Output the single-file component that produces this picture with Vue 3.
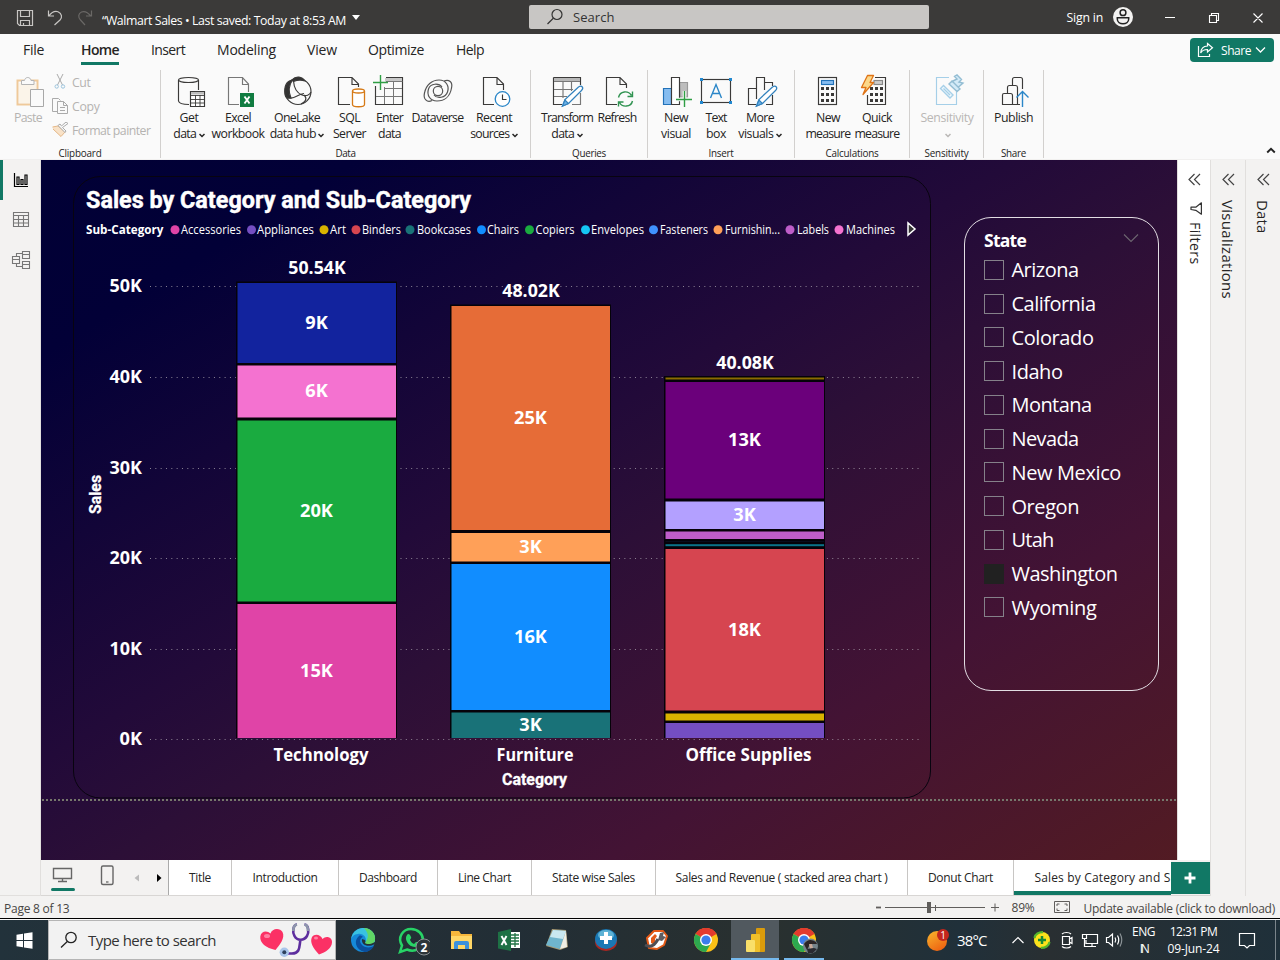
<script setup>
const vFit = {
  mounted(el, { value }) {
    const range = document.createRange()
    range.selectNodeContents(el)
    const box = range.getBoundingClientRect()
    const size = Math.max(box.width, box.height)
    el.style.letterSpacing = (value - size) / el.textContent.length + 'px'
  },
}

const menu = [
  { t: 'File', w: 21, x: 23 }, { t: 'Home', w: 38, x: 37, on: true }, { t: 'Insert', w: 34, x: 32 },
  { t: 'Modeling', w: 59, x: 32 }, { t: 'View', w: 30, x: 31 }, { t: 'Optimize', w: 56, x: 31 }, { t: 'Help', w: 28, x: 32 },
]

const groups = [
  { name: 'Data', nw: 20, w: 370, pad: 6, items: [
    { icon: 'get', cx: 189, w: 44, l: [['Get', 19], ['data', 23, 1]] },
    { icon: 'excel', cx: 238, w: 54, l: [['Excel', 26], ['workbook', 53]] },
    { icon: 'lake', cx: 297, w: 64, l: [['OneLake', 46], ['data hub', 46, 1]] },
    { icon: 'sql', cx: 349.5, w: 41, l: [['SQL', 21], ['Server', 33]] },
    { icon: 'enter', cx: 389.5, w: 39, l: [['Enter', 27], ['data', 23]] },
    { icon: 'verse', cx: 437.5, w: 57, l: [['Dataverse', 52]] },
    { icon: 'recent', cx: 494, w: 56, l: [['Recent', 36], ['sources', 39, 1]] },
  ] },
  { name: 'Queries', nw: 34, w: 117, pad: 7, items: [
    { icon: 'transform', cx: 567, w: 58, l: [['Transform', 52], ['data', 23, 1]] },
    { icon: 'refresh', cx: 617, w: 42, l: [['Refresh', 39]] },
  ] },
  { name: 'Insert', nw: 25, w: 147, pad: 8, items: [
    { icon: 'visual', cx: 676, w: 40, l: [['New', 24], ['visual', 30]] },
    { icon: 'text', cx: 716, w: 40, l: [['Text', 21], ['box', 20]] },
    { icon: 'more', cx: 760, w: 48, l: [['More', 28], ['visuals', 35, 1]] },
  ] },
  { name: 'Calculations', nw: 53, w: 115, pad: 9, items: [
    { icon: 'calc', cx: 828, w: 48, l: [['New', 24], ['measure', 45]] },
    { icon: 'quick', cx: 877, w: 50, l: [['Quick', 30], ['measure', 45]] },
  ] },
  { name: 'Sensitivity', nw: 44, w: 74, pad: 7, items: [
    { icon: 'sens', cx: 947, w: 60, off: true, l: [['Sensitivity', 53], ['', 0, 1]] },
  ] },
  { name: 'Share', nw: 25, w: 60, pad: 8, items: [
    { icon: 'publish', cx: 1013.5, w: 43, l: [['Publish', 39]] },
  ] },
]

const legend = [
  ['Accessories', '#e044a7', 175, 181, 60], ['Appliances', '#744ec2', 251.5, 257, 57], ['Art', '#d9b300', 324, 330, 16],
  ['Binders', '#d64550', 356, 362, 39], ['Bookcases', '#197278', 410, 417, 54], ['Chairs', '#118dff', 481.5, 487, 32],
  ['Copiers', '#1aab40', 529.5, 535.5, 39], ['Envelopes', '#15c6f4', 585.5, 591, 53], ['Fasteners', '#4092ff', 653.5, 660, 48],
  ['Furnishin...', '#ffa058', 718, 725, 55], ['Labels', '#be5dc9', 790, 797, 32], ['Machines', '#f472d0', 839, 846, 49],
]

const axis = [['50K', 286.5], ['40K', 377.5], ['30K', 468.5], ['20K', 558.5], ['10K', 649.5], ['0K', 739.5]]

const columns = [
  { name: 'Technology', x: 236.5, nx: 273.5, nw: 95, total: '50.54K', ty: 274, parts: [
    [282.5, 363, '#12239e', '9K'], [365, 417.5, '#f472d0', '6K'], [420, 601.5, '#1aab40', '20K'], [603.5, 738, '#e044a7', '15K'],
  ] },
  { name: 'Furniture', x: 450.5, nx: 496.5, nw: 77, total: '48.02K', ty: 297, parts: [
    [305.5, 530, '#e66c37', '25K'], [532.5, 561.5, '#ffa058', '3K'], [563.5, 710, '#118dff', '16K'], [712, 738, '#197278', '3K'],
  ] },
  { name: 'Office Supplies', x: 664.5, nx: 685.5, nw: 126, total: '40.08K', ty: 369, parts: [
    [377, 379.5, '#8a6c00', ''], [381.5, 498.5, '#6b007b', '13K'], [501, 529, '#b3a0ff', '3K'], [531, 539, '#be5dc9', ''],
    [541, 542, '#0d1730', ''], [543.7, 546.2, '#0b7288', ''], [548.5, 710.5, '#d64550', '18K'], [713, 720.5, '#d9b300', ''], [722.5, 738, '#744ec2', ''],
  ] },
]

const states = [
  ['Arizona', 67], ['California', 84], ['Colorado', 82], ['Idaho', 51], ['Montana', 80], ['Nevada', 67],
  ['New Mexico', 109.5], ['Oregon', 67.5], ['Utah', 42], ['Washington', 106], ['Wyoming', 85],
]

const tabs = [
  ['Title', 22, 63], ['Introduction', 65, 107], ['Dashboard', 58, 99], ['Line Chart', 53, 94],
  ['State wise Sales', 83, 124], ['Sales and Revenue ( stacked area chart )', 212, 252], ['Donut Chart', 65, 106],
]

const apps = ['edge', 'whatsapp', 'files', 'xls', 'note', 'aid', 'tool', 'chrome', 'pbi', 'chrome2']
</script>

<template>
  <div class="window">
    <header class="titlebar">
      <svg class="quick" viewBox="0 0 100 34" fill="none">
        <g stroke="#c8c6c4" stroke-width="1.2">
          <path d="M17.500 10.500H32.500V25.500H19.500L17.500 23.500ZM20.500 10.500V16.500H29.500V10.500M20.500 25.500V20.500H29.500V25.500M23.500 25V23" />
          <path d="M48.500 10.500V16H54M48.800 16C51 13 54 10.500 58 11.700C62 13.500 62.500 17.500 60 20L54.500 25" />
        </g>
        <path stroke="#6a6866" stroke-width="1.2" d="M91.500 10.500V16H86M91 16C88 12.500 85 10.500 81.500 12C78 13.500 78 17.500 80.500 20L85 25" />
      </svg>
      <div class="doc"><span v-fit="244">“Walmart Sales • Last saved: Today at 8:53 AM</span><i class="tri"></i></div>
      <div class="search">
        <svg width="18" height="18" viewBox="0 0 18 18" fill="none" stroke="#333" stroke-width="1.2"><circle cx="11" cy="6.500" r="5" /><path d="M7.300 10.300L1.500 16" /></svg>
        <span v-fit="41.500">Search</span>
      </div>
      <div class="signin"><span v-fit="36.500">Sign in</span>
        <svg width="20" height="20" viewBox="0 0 20 20"><circle cx="10" cy="10" r="10" fill="#f3f2f1" /><g fill="none" stroke="#222" stroke-width="1.500"><circle cx="10" cy="5.700" r="2.900" /><path d="M4.300 10.700H15.700V12C15.700 18.300 4.300 18.300 4.300 12Z" /></g></svg>
      </div>
      <svg class="winctl" viewBox="1150 0 130 34" fill="none" stroke="#fff" stroke-width="1.100"><path d="M1165 17.500H1175M1209.500 15.500H1216.500V22.500H1209.500ZM1211.500 15.500V13.500H1218.500V20.500H1216.500M1253.500 13.500L1262.500 22.500M1262.500 13.500L1253.500 22.500" /></svg>
    </header>

    <nav class="menu">
      <div v-for="m in menu" :key="m.t" class="mi" :class="{ on: m.on }" :style="{ marginLeft: m.x + 'px', width: m.w + 'px' }"><span v-fit="m.w">{{ m.t }}</span></div>
      <button class="share">
        <svg width="17" height="16" viewBox="0 0 17 16" fill="none" stroke="#fff" stroke-width="1.200"><path d="M1.500 4V14.500H12.500V12M10.500 1.500L15.500 5.700L10.500 10V7.500C7 7.500 5 8.500 3.700 11C4 6.500 6.500 4.200 10.500 4Z" /></svg>
        <span v-fit="30">Share</span>
        <svg width="11" height="8" viewBox="0 0 11 8" fill="none" stroke="#fff" stroke-width="1.300"><path d="M1 1.500L5.500 6L10 1.500" /></svg>
      </button>
    </nav>

    <section class="ribbon">
      <div class="group clip">
        <div class="clipbody">
          <div class="paste">
            <svg width="32" height="34" viewBox="14 74 32 34" fill="none">
              <path d="M24 80.500H17.500V104.500H31" stroke="#efc99a" stroke-width="2" /><path d="M31 80.500H37.500V89" stroke="#efc99a" stroke-width="2" />
              <path d="M19 83H36V89H30V103H19Z" fill="#fbf4e9" />
              <path d="M21.500 84.500V80.500H24.500C25 76.500 30.500 76.500 31 80.500H34V84.500Z" fill="#fafafa" stroke="#b5b5b5" /><path d="M30.500 89.500H43.500V106.500H30.500Z" fill="#fafafa" stroke="#a8a8a8" />
            </svg>
            <span v-fit="28">Paste</span>
          </div>
          <div class="clipcmds">
            <div><svg width="16" height="16" viewBox="52 75 16 16" fill="none" stroke="#aaa"><path d="M57 75L62.500 86M63 75L57.500 86" /><g stroke="#9cc4dd"><circle cx="56.700" cy="87.500" r="1.700" /><circle cx="63" cy="87.500" r="1.700" /></g></svg><span v-fit="18.500">Cut</span></div>
            <div><svg width="16" height="16" viewBox="52 98 16 16" fill="none" stroke="#aaa"><path d="M57 111.500H52.500V98.500H58.500L60.500 100.500M57.500 101.500H63.500L67.500 105.500V113.500H57.500ZM63.500 101.500V105.500H67.500M60 107.500H65M60 110.500H65" /></svg><span v-fit="27.500">Copy</span></div>
            <div><svg width="16" height="16" viewBox="52 122 16 16" fill="none"><path d="M52.500 127L58 126L65 132L61 136.500L53 129" fill="#f8e2c8" stroke="#e5b887" /><path d="M58 125.500L65 132.500L66 131L62.500 127.500L68 123.500L66 122L61.500 126L60 124Z" fill="#fafafa" stroke="#aaa" /></svg><span v-fit="78.500">Format painter</span></div>
          </div>
        </div>
        <div class="gname"><span v-fit="43">Clipboard</span></div>
      </div>
      <div v-for="g in groups" :key="g.name" class="group" :style="{ width: g.w + 'px' }">
        <div class="gbody" :style="{ paddingLeft: g.pad + 'px' }">
          <div v-for="b in g.items" :key="b.icon" class="rb" :class="{ off: b.off }" :style="{ width: b.w + 'px' }">
            <svg width="36" height="36" :viewBox="`${Math.round(b.cx - 18)} 73 36 36`" fill="none" stroke="#3b3a39" stroke-width="1.150">
              <template v-if="b.icon === 'get'"><ellipse cx="188.500" cy="80" rx="10" ry="2.500" /><path d="M178.500 80V101C179 103.500 184 104.500 189 104.500M198.500 80V90" /><path d="M190.500 91.500H204.500V106.500H190.500Z" fill="#fff" /><path d="M191 92H204V94.500H191Z" fill="#bdbdbd" stroke="none" /><path d="M190.500 95.500H204.500M190.500 99.500H204.500M190.500 103H204.500M195.500 95V106M200 95V106" stroke-width=".9" /></template>
              <template v-else-if="b.icon === 'excel'"><path d="M239 104.500H228.500V77.500H242.500L248.500 84V92M242.500 77.500V84.500H248.500" stroke="#777" /><rect x="240" y="93" width="14" height="14" fill="#107c41" stroke="none" /><path d="M244.500 96.500L249.500 103.500M249.500 96.500L244.500 103.500" stroke="#fff" stroke-width="1.900" /></template>
              <template v-else-if="b.icon === 'lake'"><circle cx="298" cy="91.500" r="13" /><path d="M285 94C284 86 287 81 292.500 80C289 85 288 91 291 98C287 99 285 97 285 94Z" fill="#333" /><path d="M292 80C296 75.500 302 76.500 305 81C301 79.500 297 80 293.500 81.500Z" fill="#333" /><path d="M293.500 81C294 88 297 93 302 95C306 96.500 310 95 311 92M290 98C295 99 298 94 304 93.500M304 95C308 99 305 102 301 104" /></template>
              <template v-else-if="b.icon === 'sql'"><path d="M350 104.500H338.500V77.500H352L358.500 84V87M352 77.500V84.500H358.500" /><path d="M352.500 91V104.500C352.500 107.500 364.500 107.500 364.500 104.500V91" stroke="#d67a17" stroke-width="1.300" fill="#fff" /><ellipse cx="358.500" cy="91" rx="6" ry="2" stroke="#d67a17" stroke-width="1.300" fill="#fff" /></template>
              <template v-else-if="b.icon === 'enter'"><path d="M386 77.500H402.500V104.500H375.500V86" /><path d="M385 78H402V81.500H385Z" fill="#c8c8c8" stroke="none" /><path d="M386 81.500H402.500M385 88.500H402M376 96.500H402M384.500 87V104M393.500 82V104" stroke="#777" stroke-width="1" /><path d="M373 82.500H388M380.500 75V90" stroke="#2f9e44" stroke-width="1.400" /></template>
              <template v-else-if="b.icon === 'verse'"><g stroke="#555" stroke-width="1.200"><path d="M432 100.500C427 103 423 99 424.500 93C426 85 432 80 439 80C446 80 449.500 86 447.500 92C445.500 98 437 99 434 95" /><path d="M444 81C449 79 453 82 451.500 88C450 97 444 101 437 101C430 101 426.500 95 428.500 89C430.500 83 439 83 442 87" /><circle cx="438" cy="91" r="4.700" /></g></template>
              <template v-else-if="b.icon === 'recent'"><path d="M494 104.500H483.500V77.500H497L503.500 84V90M497 77.500V84.500H503.500" /><circle cx="502.500" cy="99" r="7.300" stroke="#2a86c8" stroke-width="1.300" fill="#fff" /><path d="M502.500 94.500V99.500H506.500" /></template>
              <template v-else-if="b.icon === 'transform'"><path d="M553.500 77.500H580.500V85M553.500 77.500V104.500H562" /><path d="M554 78H580V81.500H554Z" fill="#b8b8b8" stroke="none" /><path d="M554 81.500H580M554 89.500H573M554 96.500H567M563 82V98M571.500 82V91M572 104.500H580.500V93" stroke="#777" /><path d="M562.500 106L565 99.500L578.500 87C582 84.500 584 88 581.500 90.500L568.500 103.500Z" fill="#fff" stroke="#3382bd" stroke-width="1.300" /><path d="M562.500 106L565 100L568.500 103.500Z" fill="#6cb2e8" stroke="#3382bd" /></template>
              <template v-else-if="b.icon === 'refresh'"><path d="M617 104.500H606.500V77.500H620L626.500 84V88M620 77.500V84.500H626.500" /><g stroke="#2f9250" stroke-width="1.400"><path d="M618.500 97.500C620 91 628 90 631.500 95.500M632.500 91.500V96.500H627.500M632.500 101C631 107.500 622 107.500 619.500 102.500M618.500 106.500V102H623.500" /></g></template>
              <template v-else-if="b.icon === 'visual'"><path d="M663.500 88.500H671.500V104.500H663.500Z" fill="#86bdf0" stroke="#2272b8" /><path d="M679.500 82.500H687.500V97H680Z" fill="#bdbdbd" stroke="#999" /><path d="M671.500 77.500H679.500V104.500H671.500Z" fill="#fff" /><path d="M676 99.500H692M684.500 91V107" stroke="#fafafa" stroke-width="3.500" /><path d="M676 99.500H692M684.500 91V107" stroke="#2f9e44" stroke-width="1.400" /></template>
              <template v-else-if="b.icon === 'text'"><rect x="701.500" y="79.500" width="29" height="23" /><path d="M700 78H703V81H700ZM729 78H732V81H729ZM700 101H703V104H700ZM729 101H732V104H729Z" fill="#2188d0" stroke="none" /><path d="M710.500 98L716 84.500L721.500 98M712.500 93.500H719.500" stroke="#2a86c8" stroke-width="1.400" /></template>
              <template v-else-if="b.icon === 'more'"><path d="M756 104.500H748.500V88.500H756.500M756.500 99V77.500H764.500V90M764.500 82.500H772.500V86M766 104.500H772.500V95" /><path d="M756.500 106L759 99.500L772.500 87C776 84.500 778 88 775.500 90.500L762.500 103.500Z" fill="#fff" stroke="#3382bd" stroke-width="1.300" /><path d="M756.500 106L759 100L762.500 103.500Z" fill="#6cb2e8" stroke="#3382bd" /></template>
              <template v-else-if="b.icon === 'calc'"><rect x="818.500" y="77.500" width="18" height="27" /><rect x="821.500" y="80.500" width="12" height="4" fill="#86bdf0" stroke="#2272b8" /><path d="M821 88.500H834M821 94.500H834M821 100.500H834" stroke-width="3" stroke-dasharray="3 2" /></template>
              <template v-else-if="b.icon === 'quick'"><path d="M875 77.500H885.500V104.500H867.500V95" /><rect x="874" y="80.500" width="8.500" height="4" fill="#ccc" stroke="#888" /><path d="M870 88.500H883M870 94.500H883M870 100.500H883" stroke-width="3" stroke-dasharray="3 2" /><path d="M867.500 75.500H873.500L870 82.500H873.500L863 94.500L866 87.500H861.500Z" fill="#fcd88a" stroke="#df7316" stroke-width="1.300" stroke-linejoin="round" /></template>
              <template v-else-if="b.icon === 'sens'"><g stroke="#a5cfe8"><path d="M949 77.500H936.500V104.500H956.500V92" /><path d="M940.500 88.500L943.500 85.500L953 95L950 98ZM943.500 88.500L950 95" fill="#eef7fc" stroke-width="1.400" /><path d="M949 84L952 81L960 89L957 91.500ZM951 82L957 79L954.500 76.500L957 75L961.500 79.500L959 82L963 83L958.500 87" fill="#d3eaf7" stroke="#93bdd3" stroke-width="1.400" /></g></template>
              <template v-else><path d="M1002.500 104.500V95Q1002.500 93.500 1004 93.500H1010.500Q1012.500 93.500 1012.500 95.500V104.500ZM1007.500 93V87.500Q1007.500 85.500 1009.500 85.500H1015.500Q1017.500 85.500 1017.500 87.500V104.500M1012.500 85V79.500Q1012.500 77.500 1014.500 77.500H1020.500Q1022.500 77.500 1022.500 79.500V89M1012 104.500H1020" /><path d="M1022.500 107V91.500M1016.500 97.500L1022.500 91.500L1028.500 97.500" stroke="#2a86c8" stroke-width="1.400" /></template>
            </svg>
            <div v-for="(l, i) in b.l" :key="i" class="ll">
              <span v-if="l[0]" v-fit="l[1]">{{ l[0] }}</span>
              <svg v-if="l[2]" class="chev" width="6" height="5" viewBox="0 0 6 5" fill="none" stroke="currentColor" stroke-width="1.500"><path d="M.5 1L3 3.500L5.500 1" /></svg>
            </div>
          </div>
        </div>
        <div class="gname"><span v-fit="g.nw">{{ g.name }}</span></div>
      </div>
      <svg class="collapse" width="10" height="7" viewBox="0 0 10 7" fill="none" stroke="#222" stroke-width="1.900"><path d="M1.200 5.500L5 1.800L8.800 5.500" /></svg>
    </section>

    <main class="work">
      <aside class="rail">
        <div class="railbtn on"><svg width="22" height="22" viewBox="10 169 22 22" fill="none" stroke="#000" stroke-width="1.200"><path d="M14.500 173V186.500H28M17 184.500V177H19V184.500ZM21 184.500V179.500H23V184.500ZM25 184.500V175H27V184.500Z" /></svg></div>
        <div class="railbtn"><svg width="22" height="22" viewBox="10 209 22 22" fill="none" stroke="#777" stroke-width="1.100"><path d="M13.500 212.500H28.500V226.500H13.500ZM13.500 215.500H28.500M13.500 219.500H28.500M13.500 223H28.500M18.500 215V226M23.500 215V226" /></svg></div>
        <div class="railbtn"><svg width="22" height="22" viewBox="10 249 22 22" fill="none" stroke="#777" stroke-width="1.100"><path d="M12.500 256.500H19.500V263.500H12.500ZM12.500 259.500H19.500M22.500 251.500H29.500V258.500H22.500ZM22.500 254.500H29.500M22.500 261.500H29.500V268.500H22.500ZM22.500 264.500H29.500M16.500 256V253.500H22M16.500 264V266.500H22" /></svg></div>
      </aside>

      <div class="center">
        <div class="canvas">
          <div class="pageline"></div>
          <svg class="chart" width="860" height="624" viewBox="72 175 860 624">
            <rect x="73.500" y="176.500" width="857" height="621.500" rx="27" fill="none" stroke="#08040f" />
            <text x="86" y="207.500" class="ct" textLength="385" lengthAdjust="spacingAndGlyphs">Sales by Category and Sub-Category</text>
            <g class="lg">
              <text x="86" y="234" class="b" textLength="77.500" lengthAdjust="spacingAndGlyphs">Sub-Category</text>
              <template v-for="l in legend" :key="l[0]"><circle :cx="l[2]" cy="229.700" r="4.500" :fill="l[1]" /><text :x="l[3]" y="234" :textLength="l[4]" lengthAdjust="spacingAndGlyphs">{{ l[0] }}</text></template>
            </g>
            <path d="M908 223V235L915 229Z" fill="#333" stroke="#fff" stroke-width="1.500" />
            <g v-for="a in axis" :key="a[0]">
              <line x1="150" x2="919" :y1="a[1]" :y2="a[1]" stroke="#a9a2ac" stroke-opacity=".8" stroke-dasharray="1 4.330" />
              <text class="val" text-anchor="end" x="142" :y="a[1] + 5.500" :textLength="a[0].length === 3 ? 32.500 : 22.500" lengthAdjust="spacingAndGlyphs">{{ a[0] }}</text>
            </g>
            <g v-for="c in columns" :key="c.name">
              <rect :x="c.x - .5" :y="c.parts[0][0] - 1" width="161" :height="740 - c.parts[0][0] - 1" fill="#050209" />
              <text class="val" text-anchor="middle" :x="c.x + 80.500" :y="c.ty" textLength="57.500" lengthAdjust="spacingAndGlyphs">{{ c.total }}</text>
              <template v-for="(p, i) in c.parts" :key="i">
                <rect :x="c.x + 1" :y="p[0] + .5" width="158.500" :height="p[1] - p[0] - .5" :fill="p[2]" />
                <text v-if="p[3]" class="val" text-anchor="middle" :x="c.x + 80" :y="(p[0] + p[1]) / 2 + 6" :textLength="p[3].length === 3 ? 33 : 22.500" lengthAdjust="spacingAndGlyphs">{{ p[3] }}</text>
              </template>
              <text class="val" :x="c.nx" y="761" :textLength="c.nw" lengthAdjust="spacingAndGlyphs">{{ c.name }}</text>
            </g>
            <text class="at" x="502" y="784.500" textLength="65" lengthAdjust="spacingAndGlyphs">Category</text>
            <text class="at" transform="translate(101 514) rotate(-90)" textLength="39" lengthAdjust="spacingAndGlyphs">Sales</text>
          </svg>
          <div class="slicer">
            <div class="shead"><span v-fit="42">State</span><svg width="16" height="10" viewBox="0 0 16 10" fill="none" stroke="#6d6670" stroke-width="1.100"><path d="M1 1.500L8 8.500L15 1.500" /></svg></div>
            <div v-for="s in states" :key="s[0]" class="srow"><i class="box" :class="{ sel: s[0] === 'Washington' }"></i><span v-fit="s[1]">{{ s[0] }}</span></div>
          </div>
        </div>
        <footer class="tabs">
          <div class="views">
            <svg width="127" height="35" viewBox="41 860 127 35" fill="none"><path d="M53.500 868.500H71.500V878.500H53.500ZM62.500 879V881M58 881.500H67" stroke="#666" stroke-width="1.400" /><rect x="51" y="888" width="24" height="3" rx="1.500" fill="#117865" /><rect x="101.500" y="866" width="11.500" height="18.500" rx="1.500" stroke="#666" stroke-width="1.400" /><path d="M106 882H108.500" stroke="#666" stroke-width="1.300" /><path d="M139 874.500V881.500L134.500 878Z" fill="#bbb" /><path d="M157 874V882L161.500 878Z" fill="#000" /></svg>
          </div>
          <div v-for="t in tabs" :key="t[0]" class="tab" :style="{ width: t[2] + 'px' }"><span v-fit="t[1]">{{ t[0] }}</span></div>
          <div class="tab act"><span v-fit="206">Sales by Category and Sub-Category</span></div>
          <div class="add"><svg width="12" height="12" viewBox="0 0 12 12" stroke="#fff" stroke-width="2.800"><path d="M6 .5V11.500M.5 6H11.500" /></svg></div>
        </footer>
      </div>

      <aside class="pane white">
        <svg class="dbl" width="13" height="13" viewBox="0 0 13 13" fill="none" stroke="#444" stroke-width="1.200"><path d="M6.500 1L1 6.500L6.500 12M12 1L6.500 6.500L12 12" /></svg>
        <svg class="funnel" width="12" height="13" viewBox="0 0 12 13" fill="none" stroke="#333" stroke-width="1.200"><path d="M11.400.8V12.200L5.800 8.300L1 7.500V5L5.800 5.200Z" stroke-linejoin="round" /></svg>
        <span class="vt" v-fit="42.500">Filters</span>
      </aside>
      <aside class="pane">
        <svg class="dbl" width="13" height="13" viewBox="0 0 13 13" fill="none" stroke="#444" stroke-width="1.200"><path d="M6.500 1L1 6.500L6.500 12M12 1L6.500 6.500L12 12" /></svg>
        <span class="vt" v-fit="99">Visualizations</span>
      </aside>
      <aside class="pane">
        <svg class="dbl" width="13" height="13" viewBox="0 0 13 13" fill="none" stroke="#444" stroke-width="1.200"><path d="M6.500 1L1 6.500L6.500 12M12 1L6.500 6.500L12 12" /></svg>
        <span class="vt" v-fit="33.500">Data</span>
      </aside>
    </main>

    <div class="status">
      <span v-fit="65.500">Page 8 of 13</span>
      <svg width="130" height="22" viewBox="870 897 130 22" stroke="#605e5c"><path d="M885 907.500H985M935.500 905V911M991 907.500H999M995 903.500V911.500" /><path d="M876 907.500H881" stroke-width="1.800" /><path d="M929 902V913" stroke-width="4" /></svg>
      <span class="pct" v-fit="23">89%</span>
      <svg class="fitic" width="17" height="13" viewBox="0 0 17 13" fill="none" stroke="#605e5c"><path d="M.5.5H15.500V11.500H.5ZM3 5V3H5.500M10.500 3H13V5M13 7.500V9.500H10.500M5.500 9.500H3V7.500" /></svg>
      <span class="upd" v-fit="191.500">Update available (click to download)</span>
    </div>

    <div class="taskbar">
      <div class="start"><svg width="17" height="17" viewBox="0 0 17 17" fill="#fff"><path d="M.5 2.700L7 1.700V8H.5ZM8 1.500L16.500.3V8H8ZM.5 9H7V15.300L.5 14.300ZM8 9H16.500V16.700L8 15.500Z" /></svg></div>
      <div class="tsearch">
        <svg width="18" height="18" viewBox="0 0 18 18" fill="none" stroke="#222" stroke-width="1.300"><circle cx="11" cy="6.500" r="5.200" /><path d="M7.300 10.500L1 16.500" /></svg>
        <span v-fit="128">Type here to search</span>
        <svg class="doodle" width="76" height="36" viewBox="259 922 76 36" fill="none">
          <path d="M275.500 950C266 948 259.500 943 260.300 936.500C261 931 267 930 270.500 933.500C272 928 280 927.500 282.500 932C285.500 938 279.500 945 275.500 950Z" fill="#fb3165" />
          <path d="M319 954.500C313 948 309.500 942 312 937C315 933 321 935 322.500 939C326 935 332.500 937 332 942.500C331.500 948.500 326 952 319 954.500Z" fill="#fb3165" />
          <ellipse cx="267" cy="936" rx="3" ry="2" fill="#ff80a3" /><ellipse cx="316" cy="938" rx="2" ry="1.500" fill="#ff80a3" />
          <path d="M297 924.500C292.500 925 292.500 933 294.500 936C297 941 304 941 307 936C309 933 309 925 304.500 924.500M300.500 940C299 945 301 953.500 292 953.500H285" stroke="#5d2e9e" stroke-width="2.600" />
          <path d="M297 924.500C293.500 925 293.300 928 293.300 931M304.500 924.500C308 925 308 928 308 931" stroke="#8d96ab" stroke-width="2.600" /><circle cx="284.300" cy="952.300" r="4.700" fill="#a9c5ea" /><circle cx="284.300" cy="952.300" r="2" fill="#2d405c" />
        </svg>
      </div>
      <div class="apps">
        <div v-for="a in apps" :key="a" class="app" :class="a">
          <svg width="36" height="36" viewBox="-18 -18 36 36" fill="none">
            <template v-if="a === 'edge'"><circle r="12" fill="#1689d8" /><path d="M-12-1C-10-10-4-12 1-12C8-12 13-6 12 0C11 6 4 6 2 3C5-2 0-7-5-6C-9-6-11-3-12-1Z" fill="#39c2e1" /><path d="M1-12C8-12 13-6 12 0C11 6 4 6 2 3C6-3 6-6 1-12Z" fill="#61d765" /><path d="M-4-4C-11 2-5 12 3 12C7 11 10 8 11 6C5 9-2 7-3 1C-3-1-1-3 0-3C-1-4-3-5-4-4Z" fill="#0b4f9d" /><path d="M-1-1C-2 5 5 8 12 4L12 2C9 4 4 5 2 3Q3 1 2 0Z" fill="#24323a" /></template>
            <template v-else-if="a === 'whatsapp'"><path d="M-12 12L-10 5.500C-15-3-9-11-1-11C6-11 11-6 11 0C11 8 3 13-5 9.500Z" stroke="#27d366" stroke-width="2.500" /><path d="M-5-5C-4-7-2-6-1-3C0-2-2-1-2 0C-1 2 0 3 2 4L4 2C6 2 8 4 6 6C-1 10-9 0-5-5Z" fill="#27d366" /><circle cx="12" cy="7" r="8" fill="#2d3438" stroke="#8a9094" /><text x="12" y="11.500" text-anchor="middle" class="badge">2</text></template>
            <template v-else-if="a === 'files'"><path d="M-10-9H-2L0-6H11V9H-10Z" fill="#f6b73c" /><rect x="-10" y="-4" width="21" height="13" fill="#ffd767" /><path d="M-7 9V3Q-7 1-5 1H6Q8 1 8 3V9H4V5H-3V9Z" fill="#3c91dc" /></template>
            <template v-else-if="a === 'xls'"><rect x="0" y="-8" width="11" height="16" fill="#fff" /><path d="M2-5H10M2-2H10M2 1H10M2 4H10M6-7V7" stroke="#217346" stroke-width="1.300" /><path d="M-11-8L2-11V11L-11 8.500Z" fill="#1e7145" /><path d="M-7.500-4L-2.500 5M-2.500-4L-7.500 5" stroke="#fff" stroke-width="1.900" /></template>
            <template v-else-if="a === 'note'"><path d="M-5-11L9-10L11 7L3 10L-11 6Z" fill="#a89a74" /><path d="M-4-10L9-9L3 9L-11 5Z" fill="#6fb5cd" /><path d="M-4-10L9-9L6-1L-7-3Z" fill="#c9e8f0" /><path d="M9-9L10 7L3 9Z" fill="#f0efe5" /></template>
            <template v-else-if="a === 'aid'"><ellipse cy="2" rx="11" ry="9" fill="#a92722" /><ellipse cy="-1" rx="11" ry="10" fill="#1a78b4" /><ellipse cy="-5" rx="8" ry="5" fill="#5eb2d5" /><path d="M-6-2H6M0-8V4" stroke="#fff" stroke-width="4" /></template>
            <template v-else-if="a === 'tool'"><path d="M-9-2L-2-9H7L11-4L8 5L1 9L-7 8Z" fill="#fff" stroke="#e45a17" stroke-width="2" stroke-linejoin="round" /><path d="M-5-2L-1-6L1-4L-1-1V5L-5 3Z" fill="#e45a17" /><path d="M-11 5C-5 8-1 5 2-1" stroke="#4e4e54" stroke-width="3" /><path d="M2 0L4-7L8-8L7-4L10-3L6 1Z" fill="#5e5e63" /></template>
            <template v-else-if="a === 'chrome' || a === 'chrome2'"><circle r="12" fill="#fbc116" /><path d="M0 0L-10.400-6A12 12 0 0 1 10.400-6Z" fill="#e33b2e" /><path d="M0 0L-10.400-6A12 12 0 0 0 0 12L5 3Z" fill="#2da94f" /><path d="M-10.400-6A12 12 0 0 1 10.400-6H0Z" fill="#e33b2e" /><circle r="6" fill="#fff" /><circle r="4.600" fill="#3b7ded" /><g v-if="a === 'chrome2'"><circle cx="6.500" cy="6" r="7.500" fill="#75838a" /><path d="M0 4Q5-3 12 2L13 4L6 4L3 10Z" fill="#2b2526" /><path d="M5 4L8 4L9 8L6 9Z" fill="#c8a898" /><path d="M3 9L10 8L13 9L9 13H4Z" fill="#2a2a30" /></g></template>
            <template v-else><rect x="1" y="-12" width="9" height="24" rx="1" fill="#d99b0c" /><rect x="-4" y="-6" width="9" height="18" rx="1" fill="#efbf2a" /><rect x="-9" y="0" width="9" height="12" rx="1" fill="#f9df69" /></template>
          </svg>
        </div>
      </div>
      <div class="tray">
        <svg class="sun" width="26" height="24" viewBox="925 927 26 24"><defs><linearGradient id="sg" x2=".6" y2="1"><stop stop-color="#f9b62d" /><stop offset="1" stop-color="#ee6512" /></linearGradient></defs><circle cx="937" cy="940" r="10" fill="url(#sg)" /><circle cx="943" cy="934" r="6" fill="#c4261c" /><text x="943" y="938" text-anchor="middle" class="one">1</text></svg>
        <span class="temp" v-fit="29.500">38°C</span>
        <svg class="trayic" width="120" height="24" viewBox="1008 928 120 24" fill="none" stroke="#fff" stroke-width="1.200">
          <path d="M1012.500 943L1018 937.500L1023.500 943" />
          <circle cx="1042" cy="940" r="8" fill="#fce21c" stroke="none" /><path d="M1034.500 938C1035 934 1039 932 1043 932.200M1049.500 942C1049 946 1045 948 1041 947.800" stroke="#56b62d" stroke-width="2.200" /><path d="M1038 940H1046M1042 936V944" stroke="#188a35" stroke-width="2.500" />
          <path d="M1062.500 936.500H1069.500V944.500H1062.500ZM1069.500 939L1072 937.500V943.500L1069.500 942M1062 934C1064 932 1069 932 1071 934M1062 946.500C1064 948.500 1069 948.500 1071 946.500" />
          <path d="M1087 934.500H1097.500V943.500H1086V940M1092 944V946.500M1087 946.500H1096M1082.500 934.500H1086.500V938.500H1082.500ZM1084.500 938.500V946.500H1088" />
          <path d="M1106.500 937.500H1108.500L1112.500 934V946L1108.500 942.500H1106.500ZM1115 937.500Q1116.500 940 1115 942.500M1117.500 935.500Q1120 940 1117.500 944.500" /><path d="M1120 933.500Q1123.500 940 1120 946.500" stroke="#8b9296" />
        </svg>
        <div class="two lang"><span v-fit="23">ENG</span><span v-fit="12">IN</span></div>
        <div class="two time"><span v-fit="47.500">12:31 PM</span><span v-fit="52">09-Jun-24</span></div>
        <svg class="notif" width="18" height="18" viewBox="0 0 18 18" fill="none" stroke="#fff" stroke-width="1.200"><path d="M1.500 1.500H16.500V13.500H11.500L9 16L6.500 13.500H1.500Z" /></svg>
        <i class="peek"></i>
      </div>
    </div>
  </div>
</template>

<style>
html, body { margin: 0; overflow: hidden; }
</style>
<style scoped>
.window { width: 1280px; height: 960px; display: flex; flex-direction: column; overflow: hidden; background: #fafafa; font-family: "Open Sans", "Noto Sans", sans-serif; font-size: 12.300px; color: #252423; white-space: nowrap; }
.window * { box-sizing: border-box; }
svg { display: block; flex: none; }
.titlebar { height: 34px; flex: none; background: #3b3a39; color: #fff; display: flex; align-items: center; }
.quick { width: 100px; height: 34px; }
.doc { width: 429px; padding-left: 2px; padding-top: 7px; display: flex; align-items: center; }
.tri { margin: -6px 0 0 6px; border: 4.500px solid transparent; border-top: 5px solid #fff; border-bottom: 0; }
.search { width: 400px; height: 24px; background: #c8c6c4; color: #333; border-radius: 2px; display: flex; align-items: center; padding-left: 17px; gap: 9px; font-size: 13px; }
.signin { margin-left: 137.500px; width: 83.500px; display: flex; align-items: center; gap: 10px; }
.winctl { width: 130px; height: 34px; }
.menu { height: 34px; flex: none; display: flex; position: relative; font-size: 14px; }
.mi { height: 32px; line-height: 32px; position: relative; }
.mi.on { font-weight: 600; }
.mi.on::after { content: ""; position: absolute; left: 0; right: 0; bottom: 1px; height: 3px; background: #117865; }
.share { margin: 4px 6px 0 auto; width: 84px; height: 24px; border: 0; border-radius: 4px; padding: 0 0 0 7px; background: #117865; color: #fff; display: flex; align-items: center; font: 600 12px "Open Sans", sans-serif; }
.share span { margin: 0 4px 0 7px; font-weight: 500; }
.ribbon { height: 92px; flex: none; display: flex; position: relative; border-bottom: 1px solid #f1f0ef; }
.group { position: relative; height: 92px; display: flex; flex-direction: column; flex: none; }
.group::after { content: ""; position: absolute; right: 0; top: 2px; width: 1px; height: 88px; background: #d2d0ce; }
.clip { width: 161px; color: #b5b3b1; }
.clipbody { display: flex; height: 79px; }
.paste { width: 52px; padding: 6px 0 0 14px; }
.paste svg { margin-bottom: 2px; }
.paste span { display: block; line-height: 16px; }
.clipcmds { padding-top: 2px; display: flex; flex-direction: column; }
.clipcmds div { display: flex; align-items: center; gap: 4px; height: 24px; }
.gbody { height: 79px; display: flex; padding-top: 5px; }
.rb { display: flex; flex-direction: column; align-items: center; flex: none; }
.rb.off { color: #b9b7b5; }
.ll { height: 16px; line-height: 16px; display: flex; align-items: center; justify-content: center; }
.ll:first-of-type { margin-top: 1px; }
.chev { margin: 2px 0 0 2.500px; }
.gname { text-align: center; font-size: 9.900px; line-height: 13px; color: #252423; padding-right: 1px; }
.collapse { position: absolute; right: 4.500px; bottom: 5px; }
.work { height: 736px; flex: none; display: flex; }
.rail { width: 41px; background: #f3f2f1; border-right: 1px solid #e1dfdd; border-bottom: 1px solid #e1dfdd; flex: none; }
.railbtn { height: 40px; display: flex; align-items: center; justify-content: center; border-left: 3px solid transparent; padding-right: 2px; }
.railbtn.on { border-left-color: #117865; }
.center { width: 1169px; flex: none; margin-right: -33px; display: flex; flex-direction: column; }
.canvas { width: 1136px; height: 700px; flex: none; position: relative; background: linear-gradient(to bottom right, #010035 0%, #020037 14%, #220a39 43%, #2c0f37 53%, #431334 75%, #521b23 100%); }
.pageline { position: absolute; left: 1px; right: 0; top: 639px; height: 2px; background: repeating-linear-gradient(90deg, #76776c 0 2px, transparent 2px 4px); }
.chart { position: absolute; left: 31px; top: 15px; }
.chart text { fill: #fff; }
.ct { font: 700 23px Roboto, sans-serif; stroke: #fff; stroke-width: .45px; }
.at { font: 700 16px Roboto, sans-serif; stroke: #fff; stroke-width: .3px; }
.lg { font: 12.300px "Open Sans", sans-serif; }
.lg .b { font-weight: 700; }
.val { font: 700 17.800px "Open Sans", sans-serif; }
.slicer { position: absolute; left: 923px; top: 57px; width: 195px; height: 474px; border: 1px solid #e2dde3; border-radius: 27px; padding: 11px 19px; color: #fff; }
.shead { display: flex; justify-content: space-between; height: 24px; font: 700 17.500px/23px "Open Sans", sans-serif; }
.shead svg { margin-top: 4px; }
.srow { height: 33.760px; display: flex; align-items: center; gap: 8px; font-size: 20px; margin-left: -.5px; }
.box { width: 20px; height: 20px; border: 1px solid #85818a; flex: none; }
.box.sel { background: #212121; border-color: #212121; }
.tabs { height: 36px; display: flex; background: #f3f2f1; border-bottom: 1px solid #d8d6d4; position: relative; z-index: 1; }
.views { width: 128px; border-right: 1px solid #aaa; }
.tab { background: #fff; border-right: 1px solid #c8c6c4; text-align: center; line-height: 35px; font-size: 12px; flex: none; }
.tab.act { width: 157px; text-align: left; padding-left: 20.500px; overflow: hidden; font-weight: 500; border-right: 0; border-bottom: 4px solid #117865; }
.add { width: 39px; height: 32px; margin-top: 2px; background: #117865; display: flex; align-items: center; justify-content: center; padding-right: 1px; }
.pane { width: 35px; background: #f3f2f1; border-left: 1px solid #e1dfdd; position: relative; display: flex; flex-direction: column; align-items: center; padding-top: 13px; flex: none; }
.pane.white { width: 33px; height: 702px; background: #fff; }
.vt { writing-mode: vertical-rl; font-size: 15px; font-weight: 500; line-height: 20px; margin-top: 14px; margin-right: 1px; }
.pane.white .vt { margin-top: 7px; font-size: 14px; margin-left: 2px; margin-right: 0; }
.funnel { margin: 16px 0 0 4px; }
.status { height: 23px; flex: none; background: #f3f2f1; border-bottom: 1px solid #000; display: flex; align-items: center; padding: 3px 0 0 4px; font-size: 12px; color: #484644; position: relative; }
.status > svg:first-of-type { margin: -1px 0 0 800px; }
.pct { margin: -2px 0 0 12px; font-size: 12px; }
.fitic { margin: -3px 0 0 19px; }
.upd { margin-left: 13px; }
.taskbar { height: 41px; flex: none; display: flex; background: linear-gradient(90deg, #22323b, #252f35 25%, #222e36 40%, #29302f 60%, #20303a 75%, #292f32 82%, #1f303a); color: #fff; margin-top: 1px; }
.start { width: 48px; height: 40px; display: flex; align-items: center; justify-content: center; }
.tsearch { width: 288px; height: 40px; background: #f2f2f2; border: 1px solid #b5b5b5; display: flex; align-items: center; color: #333; font-size: 15px; padding-left: 11px; gap: 10px; }
.doodle { margin-left: auto; }
.apps { display: flex; width: 490px; padding-left: 2px; }
.app { width: 49px; height: 40px; flex: none; display: flex; align-items: center; justify-content: center; }
.app.note, .app.aid { padding-right: 3px; }
.app.tool, .app.xls { padding-right: 2px; }
.app.pbi { background: #51595f; border-bottom: 2px solid #76b9ed; width: 48px; margin-left: 1px; }
.app.chrome2 { width: 40px; margin-left: 5px; border-bottom: 2px solid #76b9ed; }
.app.pbi svg, .app.chrome2 svg { margin-bottom: -2px; }
.badge { font: 700 12px "Open Sans", sans-serif; fill: #fff; }
.one { font: 10px "Open Sans", sans-serif; fill: #fff; }
.tray { flex: 1; height: 40px; display: flex; align-items: center; }
.sun { margin-left: 99px; }
.temp { font-size: 15px; width: 30px; margin-left: 6px; }
.trayic { margin-left: 21px; }
.two { display: flex; flex-direction: column; align-items: center; line-height: 17px; font-size: 12px; height: 36px; }
.lang { width: 28px; margin-left: 1.500px; margin-top: 2px; }
.time { width: 70px; margin-left: 1px; margin-top: 1px; }
.notif { margin: 1px 0 0 9.500px; }
.peek { width: 1px; height: 40px; margin-left: 19px; background: #7b858b; }
</style>
